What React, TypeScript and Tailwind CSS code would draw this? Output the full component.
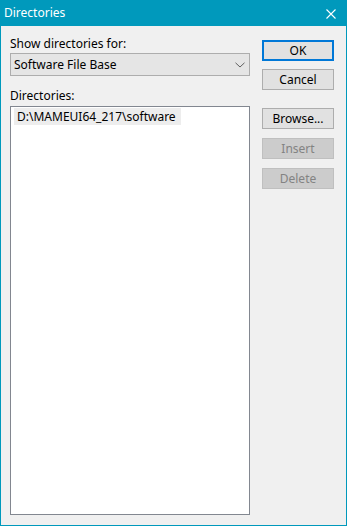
import { ReactNode } from "react";

const font = { fontFamily: '"Noto Sans", "Open Sans", sans-serif' };

function Button({ children, primary, disabled, className = "" }: { children: ReactNode; primary?: boolean; disabled?: boolean; className?: string }) {
  const look = disabled
    ? "bg-[#cccccc] border border-[#bfbfbf] text-[#838383]"
    : primary
      ? "bg-[#e1e1e1] border-2 border-[#0078d7] text-black"
      : "bg-[#e1e1e1] border border-[#adadad] text-black";
  return (
    <div className={`flex h-[21px] w-[72px] items-center justify-center text-[12px] leading-none ${look} ${className}`}>
      {children}
    </div>
  );
}

export default function App() {
  return (
    <div className="flex h-[526px] w-[347px] flex-col bg-[#0099bc] text-[12px] text-black" style={font}>
      <div className="flex h-[26px] shrink-0 items-center justify-between pl-[4px] pr-[11px] text-white">
        <span className="text-[12px] leading-none">Directories</span>
        <svg width="10" height="10" viewBox="0 0 10 10" className="mt-[1px]">
          <path d="M0.5 0.5 L9.5 9.5 M9.5 0.5 L0.5 9.5" stroke="white" strokeWidth="1.1" fill="none" />
        </svg>
      </div>

      <div className="mx-[1px] mb-[1px] flex flex-1 bg-[#f0f0f0] pl-[9px] pr-[11px] pt-[10px] pb-[10px]">
        <div className="flex w-[240px] flex-col">
          <div className="h-4 leading-4">Show directories for:</div>
          <div className="mt-[1px] flex h-[23px] items-center justify-between border border-[#adadad] bg-[#e5e5e5] pl-[3px] pr-[4px]">
            <span className="leading-4">Software File Base</span>
            <svg width="10" height="6" viewBox="0 0 10 6">
              <path d="M0.5 0.8 L5 5 L9.5 0.8" stroke="#505050" strokeWidth="0.9" fill="none" />
            </svg>
          </div>
          <div className="mt-[12px] h-4 leading-4">Directories:</div>
          <div className="mt-[2px] flex flex-1 flex-col items-start border border-[#828790] bg-white px-[3px] pt-[1px]">
            <div className="flex h-[17px] items-center bg-[#ededed] pl-[3px] pr-[5px] leading-4">
              D:\MAMEUI64_217\software
            </div>
          </div>
        </div>

        <div className="ml-[12px] flex flex-col pt-[4px]">
          <Button primary>OK</Button>
          <Button className="mt-[8px]">Cancel</Button>
          <Button className="mt-[18px]">Browse...</Button>
          <Button disabled className="mt-[9px]">Insert</Button>
          <Button disabled className="mt-[9px]">Delete</Button>
        </div>
      </div>
    </div>
  );
}
